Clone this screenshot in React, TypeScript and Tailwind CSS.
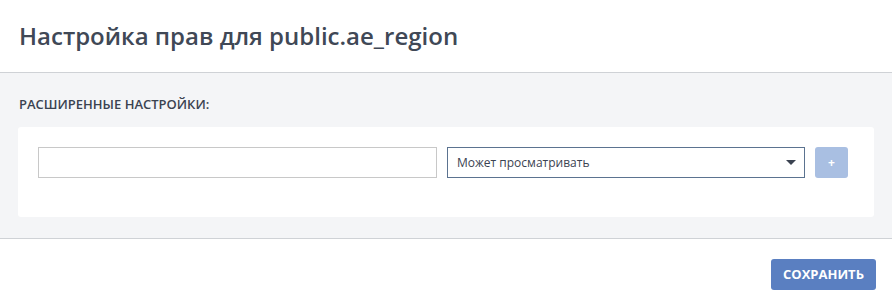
const App = () => {
  return (
    <div className="w-[892px] h-[308px] bg-white text-[#3b4351] font-['Open_Sans',sans-serif]">
      <div className="h-[73px] border-b border-[#cfd2d6] flex items-center px-[19px]">
        <h2 className="text-[24px] font-semibold leading-none text-[#404856]">
          Настройка прав для public.ae_region
        </h2>
      </div>
      <div className="bg-[#f4f5f7] border-b border-[#cfd2d6] px-[18px] pt-[22px] pb-[21px]">
        <div className="text-[13px] font-semibold uppercase leading-[18px] px-px">
          Расширенные настройки:
        </div>
        <div className="mt-[14px] bg-white rounded-[3px] h-[90px] px-[20px] pt-[20px]">
          <div className="flex items-center gap-[10px]">
            <input
              className="w-[399px] h-[31px] border border-[#c8c8c8] outline-none px-2 text-[12px]"
              type="text"
            />
            <div className="w-[358px] h-[31px] border border-[#5b7390] flex items-center justify-between pl-[9px] pr-[8px] text-[12px] text-[#3b4351]">
              <span>Может просматривать</span>
              <svg width="10" height="5" viewBox="0 0 10 5">
                <path d="M0 0h10L5 5z" fill="#3b4351" />
              </svg>
            </div>
            <button className="w-[33px] h-[31px] rounded-[3px] bg-[#a9bfe2] text-white text-[12px] font-bold leading-none">
              +
            </button>
          </div>
        </div>
      </div>
      <div className="flex justify-end px-[16px] pt-[20px]">
        <button className="w-[105px] h-[31px] rounded-[3px] bg-[#5a7fc1] text-white text-[13px] font-bold uppercase">
          Сохранить
        </button>
      </div>
    </div>
  )
}

export default App
